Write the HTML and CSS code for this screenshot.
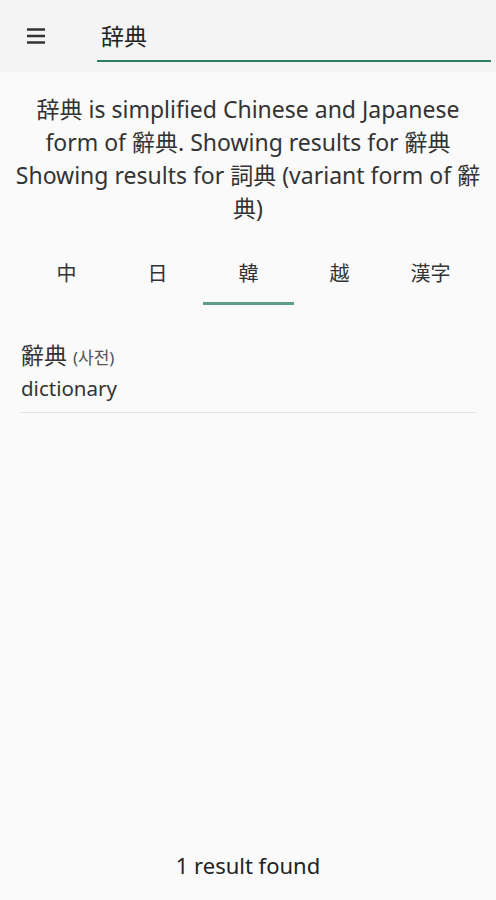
FILE: index.html
```html
<!DOCTYPE html>
<html lang="en">
<head>
    <meta charset="UTF-8">
    <meta name="viewport" content="width=device-width, initial-scale=1.0">
    <title>辞典</title>
    <link rel="stylesheet" href="styles.css">
</head>
<body>

<div class="topbar">
    <div class="menu-btn">
        <svg width="24" height="24" viewBox="0 0 24 24"><path d="M3 5.5h18M3 12h18M3 18.5h18" stroke="#333" stroke-width="2.5" fill="none"/></svg>
    </div>
    <div class="search">辞典</div>
</div>

<div class="notice">
    辞典 is simplified Chinese and Japanese form of 辭典. Showing results for 辭典 Showing results for 詞典 (variant form of 辭典)
</div>

<div class="tabs">
    <div class="tab">中</div>
    <div class="tab">日</div>
    <div class="tab active">韓</div>
    <div class="tab">越</div>
    <div class="tab">漢字</div>
</div>

<div class="results">
    <div class="entry">
        <div class="entry-word">辭典 <span class="reading">(사전)</span></div>
        <div class="entry-def">dictionary</div>
    </div>
</div>

<div class="footer">1 result found</div>

</body>
</html>
```

FILE: styles.css
```css
html, body {
    height: 100%;
}
body {
    margin: 0;
    background-color: #fafafa;
    color: #2b2b2b;
    font-family: "Noto Sans", "Noto Sans CJK JP", "Noto Sans CJK KR", sans-serif;
    display: flex;
    flex-direction: column;
}
.topbar {
    height: 72px;
    background-color: #f4f4f4;
    display: flex;
    align-items: flex-start;
}
.menu-btn {
    width: 72px;
    padding: 24px 0 0 24px;
    box-sizing: border-box;
}
.menu-btn svg {
    display: block;
}
.search {
    flex: 1;
    margin: 20px 5px 0 25px;
    padding: 0 0 8px 4px;
    border-bottom: 2px solid #2f7d62;
    font-size: 23px;
    line-height: 32px;
    color: #222;
}
.notice {
    padding: 21px 10px 0;
    text-align: center;
    font-size: 23px;
    line-height: 33px;
    color: #333;
}
.tabs {
    display: flex;
    margin: 25px 20px 0 21px;
}
.tab {
    flex: 1;
    text-align: center;
    font-size: 20px;
    line-height: 28px;
    padding: 10px 0 14px;
    color: #333;
    border-bottom: 3px solid transparent;
}
.tab.active {
    border-bottom-color: #5e9e88;
}
.results {
    flex: 1;
    padding: 0 20px 0 21px;
    margin-top: 34px;
}
.entry {
    border-bottom: 1px solid #e2e2e2;
    padding-bottom: 10px;
}
.entry-word {
    font-size: 23px;
    line-height: 32px;
    color: #333;
}
.reading {
    font-size: 17px;
    color: #555;
}
.entry-def {
    font-size: 20.5px;
    line-height: 28px;
    color: #333;
}
.footer {
    text-align: center;
    font-size: 22px;
    line-height: 32px;
    padding-bottom: 19px;
    color: #222;
}
```
